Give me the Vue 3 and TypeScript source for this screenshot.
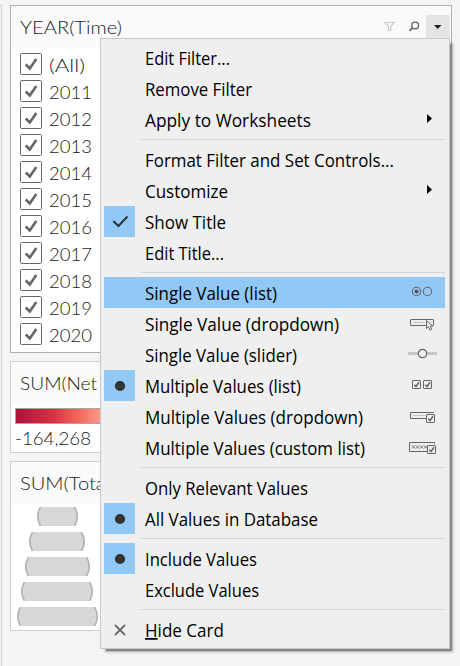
<script setup lang="ts">
type Mark = 'check' | 'dot' | 'close'
type Hint = 'submenu' | 'radios' | 'dropdown' | 'slider' | 'checks' | 'dropcheck' | 'custom'

interface MenuItem {
  label: string
  width: number
  mark?: Mark
  hint?: Hint
  active?: boolean
  accessKey?: boolean
}

const groups: MenuItem[][] = [
  [
    { label: 'Edit Filter...', width: 85 },
    { label: 'Remove Filter', width: 107 },
    { label: 'Apply to Worksheets', width: 166, hint: 'submenu' },
  ],
  [
    { label: 'Format Filter and Set Controls...', width: 249 },
    { label: 'Customize', width: 83, hint: 'submenu' },
    { label: 'Show Title', width: 81, mark: 'check' },
    { label: 'Edit Title...', width: 79 },
  ],
  [
    { label: 'Single Value (list)', width: 132, hint: 'radios', active: true },
    { label: 'Single Value (dropdown)', width: 194, hint: 'dropdown' },
    { label: 'Single Value (slider)', width: 152, hint: 'slider' },
    { label: 'Multiple Values (list)', width: 156, mark: 'dot', hint: 'checks' },
    { label: 'Multiple Values (dropdown)', width: 218, hint: 'dropcheck' },
    { label: 'Multiple Values (custom list)', width: 220, hint: 'custom' },
  ],
  [
    { label: 'Only Relevant Values', width: 163 },
    { label: 'All Values in Database', width: 173, mark: 'dot' },
  ],
  [
    { label: 'Include Values', width: 112, mark: 'dot' },
    { label: 'Exclude Values', width: 114 },
  ],
  [{ label: 'Hide Card', width: 79, mark: 'close', accessKey: true }],
]

const years: string[] = ['(All)', '2011', '2012', '2013', '2014', '2015', '2016', '2017', '2018', '2019', '2020']
const bars: number[] = [41, 56, 65, 72, 81]
</script>

<template>
  <div class="page">
    <div class="edge"></div>
    <div class="column">
      <section class="card filter-card">
        <header class="head">
          <svg class="title" width="120" height="42"><text x="9" y="28" textLength="102" lengthAdjust="spacingAndGlyphs">YEAR(Time)</text></svg>
          <div class="tools">
            <svg width="42" height="23" viewBox="0 0 42 23">
              <path d="M.8 7.5H10.200L6.800 11.500V15.500H4.500V11.500Z" fill="none" stroke="#c6c6c6" stroke-width="1.1" />
              <circle cx="31.200" cy="10.500" r="3.400" fill="none" stroke="#606060" stroke-width="1.300" />
              <path d="M28.700 12.800L25.500 15.800" stroke="#606060" stroke-width="1.700" />
            </svg>
            <div class="drop">
              <svg width="24" height="23"><path d="M8 10H15.500L11.700 14Z" fill="#222" /></svg>
            </div>
          </div>
        </header>
        <ul class="years">
          <li v-for="y in years" :key="y">
            <svg width="22" height="22" viewBox="0 0 22 22">
              <rect x=".5" y=".5" width="21" height="21" rx="1" fill="#fff" stroke="#666" />
              <path d="M5.700 11.500L9.800 15.500L16.300 6" fill="none" stroke="#666" stroke-width="2.600" />
            </svg>
            <svg class="year" width="60" height="22">
              <text x="0" y="19" :textLength="y === '(All)' ? 36 : 43" lengthAdjust="spacingAndGlyphs">{{ y }}</text>
            </svg>
          </li>
        </ul>
      </section>

      <section class="card color-card">
        <header class="head">
          <svg class="title" width="140" height="42"><text x="9" y="28" textLength="110" lengthAdjust="spacingAndGlyphs">SUM(Net Pro</text></svg>
        </header>
        <div class="ramp"></div>
        <svg class="value" width="100" height="26"><text x="4" y="21" textLength="76" lengthAdjust="spacingAndGlyphs">-164,268</text></svg>
      </section>

      <section class="card size-card">
        <header class="head">
          <svg class="title" width="110" height="42"><text x="9" y="28" textLength="90" lengthAdjust="spacingAndGlyphs">SUM(Total</text></svg>
        </header>
        <div class="bars">
          <svg v-for="w in bars" :key="w" :width="w" height="19">
            <path :d="`M3.500 0Q-2 9.500 3.500 19H${w - 3.5}Q${w + 2} 9.500 ${w - 3.5} 0Z`" fill="#d7d7d7" />
            <path :d="`M3.500 0Q-2 9.500 3.500 19M${w - 3.5} 19Q${w + 2} 9.500 ${w - 3.5} 0`" fill="none" stroke="#b3b3b3" stroke-width="1.600" />
          </svg>
        </div>
      </section>
    </div>

    <nav class="menu">
      <div v-for="(group, g) in groups" :key="g" class="group">
        <div v-for="item in group" :key="item.label" class="item" :class="{ active: item.active }">
          <div class="mark" :class="{ on: item.mark && item.mark !== 'close' }">
            <svg width="31" height="31" viewBox="0 0 31 31">
              <path v-if="item.mark === 'check'" d="M9.300 15L14.400 20L23.500 10.500" fill="none" stroke="#333" stroke-width="2" />
              <circle v-else-if="item.mark === 'dot'" cx="16" cy="16" r="5.100" fill="#333" />
              <path v-else-if="item.mark === 'close'" d="M11 11L21 21M21 11L11 21" stroke="#6a6a6a" stroke-width="1.800" />
            </svg>
          </div>
          <svg class="label" height="31">
            <text x="0" y="23" :textLength="item.width" lengthAdjust="spacingAndGlyphs"><template v-if="item.accessKey"><tspan class="key">{{ item.label[0] }}</tspan>{{ item.label.slice(1) }}</template><template v-else>{{ item.label }}</template></text>
          </svg>
          <svg class="hint" width="40" height="31" viewBox="0 0 40 31">
            <path v-if="item.hint === 'submenu'" d="M22 10V19L27 14.500Z" fill="#000" />
            <g v-else-if="item.hint === 'radios'" fill="none" stroke="#666" stroke-width="1.100">
              <circle cx="11.500" cy="14.500" r="4.200" /><circle cx="22.500" cy="14.500" r="4.200" />
              <circle cx="11.500" cy="14.500" r="2" fill="#555" stroke="none" />
            </g>
            <g v-else-if="item.hint === 'dropdown'" fill="none" stroke="#666">
              <rect x="5.500" y="11.500" width="23" height="6" rx=".5" />
              <path d="M8 14.500H20" stroke="#c4c4c4" />
              <path d="M21.500 12.500V20.500L23.400 18.800L25 22.100L26.700 21.300L25.200 18.200H27.700Z" fill="#efefef" />
            </g>
            <g v-else-if="item.hint === 'slider'">
              <path d="M3 14.500H32" stroke="#c6c6c6" stroke-width="3" />
              <circle cx="17.500" cy="14.500" r="4.200" fill="#efefef" stroke="#666" stroke-width="1.200" />
            </g>
            <g v-else-if="item.hint === 'checks'" fill="none" stroke="#666">
              <rect x="7.500" y="10.500" width="8" height="8" rx=".5" /><rect x="18.500" y="10.500" width="8" height="8" rx=".5" />
              <path d="M9.200 14.700L11 16.500L14 12.300M20.200 14.700L22 16.500L25 12.300" stroke-width="1.500" />
            </g>
            <g v-else-if="item.hint === 'dropcheck'" fill="none" stroke="#666">
              <path d="M28.500 12V11.500H5.500V17.500H21" />
              <path d="M8 14.500H20" stroke="#c4c4c4" />
              <rect x="21.500" y="13.500" width="8" height="8" rx=".5" fill="#efefef" />
              <path d="M23.200 17.700L25 19.500L28 15.300" stroke-width="1.500" />
            </g>
            <g v-else-if="item.hint === 'custom'" fill="none" stroke="#666">
              <path d="M29.500 12V10.500H4.500V19.500H22" />
              <path d="M7 13.500L10 16.500M10 13.500L7 16.500M11 13.500L14 16.500M14 13.500L11 16.500M15 13.500L18 16.500M18 13.500L15 16.500M19 13.500L22 16.500M22 13.500L19 16.500" stroke-width=".9" />
              <rect x="22.500" y="13.500" width="8" height="8" rx=".5" fill="#efefef" />
              <path d="M24.200 17.700L26 19.500L29 15.300" stroke-width="1.500" />
            </g>
          </svg>
        </div>
      </div>
    </nav>
  </div>
</template>

<style>
body {
  background: #f4f4f4;
}
</style>

<style scoped>
.page {
  position: relative;
  display: flex;
  box-sizing: border-box;
  width: 460px;
  height: 666px;
  overflow: hidden;
  padding-top: 5px;
  background: #f4f4f4;
}
svg {
  display: block;
  flex: none;
}
.edge {
  width: 1px;
  border-top: 1px solid #d0d0d0;
  border-right: 1px solid #d0d0d0;
  margin-right: 8px;
}
.column {
  display: flex;
  flex-direction: column;
  gap: 8px;
  width: 442px;
}
.card {
  box-sizing: border-box;
  border: 1px solid #cfcfcf;
  background: #fff;
}
.filter-card {
  height: 348px;
  border-color: #b0b0b0;
}
.color-card {
  height: 92px;
}
.size-card {
  height: 170px;
}
.head {
  display: flex;
  justify-content: space-between;
  height: 42px;
  background: #fafafa;
}
.title text,
.year text,
.value text {
  font-family: Lato, "Open Sans", sans-serif;
  font-size: 17.8px;
  font-weight: 300;
  fill: #222;
}
.tools {
  display: flex;
  padding-top: 9px;
  padding-right: 1px;
}
.drop {
  width: 24px;
  height: 23px;
  background: #e5e5e5;
}
.years {
  display: flex;
  flex-direction: column;
  gap: 5px;
  margin: 0;
  padding: 5px 0 0 9px;
  list-style: none;
}
.years li {
  display: flex;
  gap: 7px;
  height: 22px;
}
.ramp {
  box-sizing: border-box;
  width: 172px;
  height: 16px;
  margin: 4px 0 0 4px;
  border: 1px solid #aaa39a;
  background: linear-gradient(90deg, #ae123a, #d63245 22%, #f4665a 36%, #ff9d8a 50%, #ffddd5);
}
.bars {
  display: flex;
  flex-direction: column;
  align-items: center;
  gap: 6px;
  width: 92px;
  padding-top: 3px;
}
.menu {
  position: absolute;
  left: 100px;
  top: 38px;
  box-sizing: border-box;
  width: 350px;
  height: 611px;
  padding: 3px 4px 3px 3px;
  border: 1px solid #c8c8c8;
  background: #efefef;
  box-shadow: 4px 4px 1px -2px #858585, 4px 4px 3px -1px rgba(0, 0, 0, 0.25);
}
.group + .group::before {
  content: "";
  display: block;
  height: 1px;
  margin: 4px 0 4px 37px;
  background: #d4d4d4;
}
.item {
  display: flex;
  height: 31px;
}
.active {
  background: #91c8f6;
}
.mark {
  width: 31px;
  height: 31px;
}
.on {
  background: #91c8f6;
}
.label {
  flex: 1;
  width: 0;
  margin-left: 10px;
  overflow: visible;
}
.label text {
  font-family: "Open Sans", "Noto Sans", sans-serif;
  font-size: 17.6px;
  fill: #000;
}
.key {
  text-decoration: underline;
}
</style>
